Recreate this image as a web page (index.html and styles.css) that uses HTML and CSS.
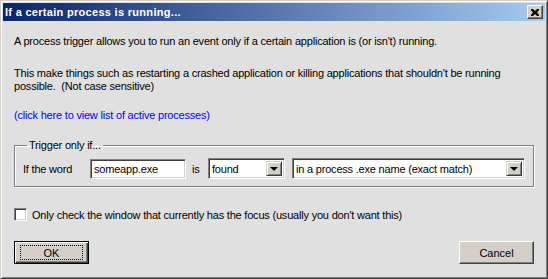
FILE: index.html
```html
<!DOCTYPE html>
<html>
<head>
  <title>If a certain process is running...</title>
  <link rel="stylesheet" href="styles.css">
</head>
<body>
  <div class="window">
    <div class="titlebar">
      <span class="title">If a certain process is running...</span>
      <span class="close">
        <svg width="8" height="7" viewBox="0 0 8 7"><path d="M0 0h2l2 2 2-2h2v1l-2 2.5 2 2.5v1h-2l-2-2-2 2h-2v-1l2-2.5-2-2.5z" fill="#000"/></svg>
      </span>
    </div>
    <div class="content">
      <p class="intro">A process trigger allows you to run an event only if a certain application is (or isn't) running.</p>
      <p class="info">This make things such as restarting a crashed application or killing applications that shouldn't be running<br>possible.&nbsp; (Not case sensitive)</p>
      <a class="link" href="#">(click here to view list of active processes)</a>

      <fieldset class="group">
        <legend>Trigger only if...</legend>
        <div class="row">
          <span class="lbl">If the word</span>
          <span class="textbox">someapp.exe</span>
          <span class="lbl-is">is</span>
          <div class="combo combo-small">
            <span class="combo-text">found</span>
            <span class="combo-btn"><span class="arrow"></span></span>
          </div>
          <div class="combo combo-wide">
            <span class="combo-text">in a process .exe name (exact match)</span>
            <span class="combo-btn"><span class="arrow"></span></span>
          </div>
        </div>
      </fieldset>

      <label class="check">
        <span class="box"></span>
        <span>Only check the window that currently has the focus (usually you don't want this)</span>
      </label>

      <div class="buttons">
        <button class="btn btn-default"><span class="focus">OK</span></button>
        <button class="btn">Cancel</button>
      </div>
    </div>
  </div>
</body>
</html>
```

FILE: styles.css
```css
body {
  margin: 0;
  font-family: "Liberation Sans", Arial, sans-serif;
  font-size: 11px;
  color: #000;
}
.window {
  width: 548px;
  height: 279px;
  box-sizing: border-box;
  background-color: #e0e0e0;
  border: 1px solid;
  border-color: #d4d0c8 #404040 #404040 #d4d0c8;
  box-shadow: inset 1px 1px #fff, inset -1px -1px #808080;
  padding: 2px;
  display: flex;
  flex-direction: column;
}
.titlebar {
  height: 18px;
  background: linear-gradient(to right, #0a246a, #a6caf0);
  display: flex;
  align-items: center;
  justify-content: space-between;
  padding: 0 2px 0 2px;
}
.title {
  color: #fff;
  font-weight: bold;
  font-size: 11px;
  letter-spacing: 0.3px;
}
.close {
  width: 16px;
  height: 14px;
  box-sizing: border-box;
  background-color: #d4d0c8;
  border: 1px solid;
  border-color: #fff #404040 #404040 #fff;
  box-shadow: inset -1px -1px #808080;
  display: flex;
  align-items: center;
  justify-content: center;
}
.content {
  padding: 0 0 0 11px;
  flex: 1;
  display: flex;
  flex-direction: column;
  letter-spacing: -0.2px;
}
p {
  margin: 0;
  line-height: 13px;
}
.intro {
  margin-top: 14px;
}
.info {
  margin-top: 19px;
}
.link {
  margin-top: 16px;
  line-height: 13px;
  color: #0000ff;
  text-decoration: none;
}
.group {
  margin: 17px 0 0 0;
  width: 520px;
  box-sizing: border-box;
  border: 1px solid #808080;
  box-shadow: inset 1px 1px #fff, 1px 1px #fff;
  padding: 6px 0 13px 8px;
  height: 48px;
}
.group legend {
  padding: 0 2px;
  margin-left: 4px;
  line-height: 13px;
}
.row {
  display: flex;
  align-items: center;
}
.lbl {
  width: 67px;
}
.textbox {
  width: 96px;
  height: 20px;
  box-sizing: border-box;
  background-color: #fff;
  border: 1px solid;
  border-color: #808080 #fff #fff #808080;
  box-shadow: inset 1px 1px #404040, inset -1px -1px #d4d0c8;
  padding: 3px 0 0 3px;
}
.lbl-is {
  margin-left: 6px;
  width: 16px;
}
.combo {
  height: 21px;
  box-sizing: border-box;
  background-color: #fff;
  border: 1px solid;
  border-color: #808080 #fff #fff #808080;
  box-shadow: inset 1px 1px #404040, inset -1px -1px #d4d0c8;
  padding: 2px;
  display: flex;
  justify-content: space-between;
}
.combo-small {
  width: 77px;
}
.combo-wide {
  width: 233px;
  margin-left: 7px;
}
.combo-text {
  padding: 2px 0 0 1px;
}
.combo-btn {
  width: 16px;
  height: 15px;
  box-sizing: border-box;
  background-color: #d4d0c8;
  border: 1px solid;
  border-color: #d4d0c8 #404040 #404040 #d4d0c8;
  box-shadow: inset 1px 1px #fff, inset -1px -1px #808080;
  display: flex;
  align-items: center;
  justify-content: center;
}
.arrow {
  width: 0;
  height: 0;
  border-left: 4px solid transparent;
  border-right: 4px solid transparent;
  border-top: 4px solid #000;
  margin-top: 1px;
}
.check {
  margin-top: 21px;
  display: flex;
  align-items: center;
}
.box {
  width: 13px;
  height: 13px;
  box-sizing: border-box;
  background-color: #fff;
  border: 1px solid;
  border-color: #808080 #fff #fff #808080;
  box-shadow: inset 1px 1px #404040, inset -1px -1px #d4d0c8;
  margin-right: 5px;
}
.buttons {
  margin-top: 20px;
  width: 520px;
  display: flex;
  justify-content: space-between;
}
.btn {
  width: 75px;
  height: 23px;
  box-sizing: border-box;
  font-family: "Liberation Sans", Arial, sans-serif;
  font-size: 11px;
  background-color: #d4d0c8;
  border: 1px solid;
  border-color: #fff #404040 #404040 #fff;
  box-shadow: inset -1px -1px #808080;
  padding: 0;
  display: flex;
  align-items: center;
  justify-content: center;
}
.btn-default {
  border: 1px solid #000;
  box-shadow: inset 1px 1px #fff, inset -1px -1px #404040, inset -2px -2px #808080;
}
.focus {
  width: 63px;
  height: 15px;
  box-sizing: border-box;
  border: 1px dotted #000;
  display: flex;
  align-items: center;
  justify-content: center;
}
```
